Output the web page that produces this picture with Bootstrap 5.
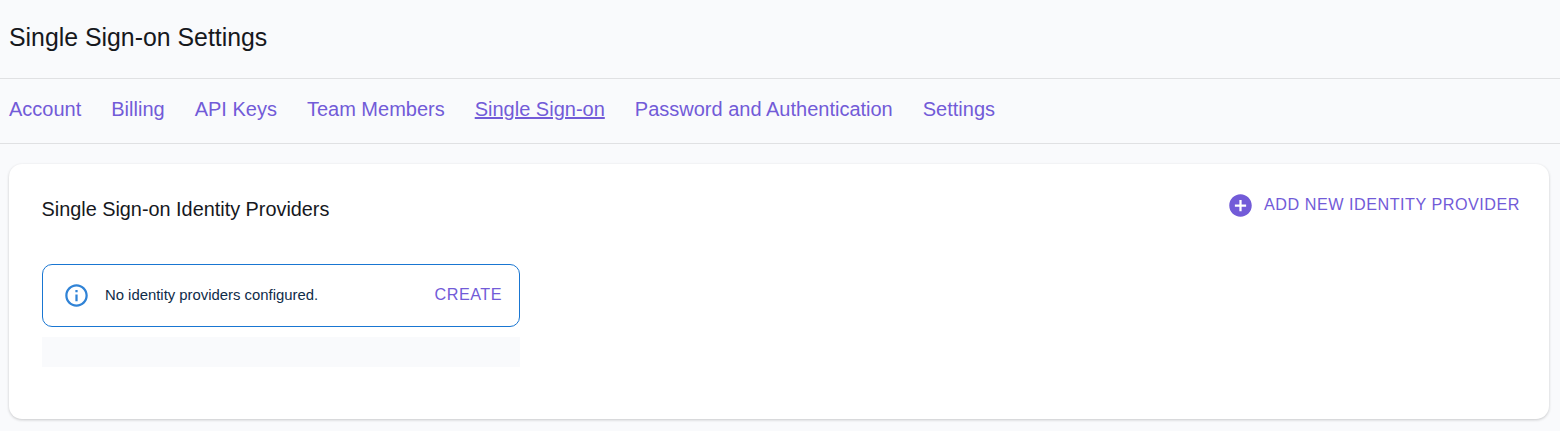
<!DOCTYPE html>
<html lang="en">
<head>
<meta charset="utf-8">
<meta name="viewport" content="width=device-width, initial-scale=1">
<title>Single Sign-on Settings</title>
<link href="https://cdn.jsdelivr.net/npm/bootstrap@5.3.0/dist/css/bootstrap.min.css" rel="stylesheet">
<style>
body{background:#f9fafc;font-family:"Liberation Sans",Arial,sans-serif;color:#16181d;min-height:100vh}
.page-head{height:79px;padding:0 9px 3px;border-bottom:1px solid #e0e1e3}
.page-head h1{font-size:24.85px;line-height:30px;font-weight:400}
.tabs{height:65px;padding:0 9px 4px;gap:30px;border-bottom:1px solid #e0e1e3}
.tabs .nav-link{padding:0;font-size:20px;line-height:30px;color:#725bd8}
.tabs .active{text-decoration:underline}
.panel{margin:20px 11px 0 9px;height:255px;border:0;border-radius:13px;background:#fff;padding:28px 29px 0 32.500px;box-shadow:0 1px 3px rgba(0,0,0,.2)}
.panel h2{font-size:19.85px;line-height:30px;font-weight:400;margin-top:2px}
.action{color:#725bd8;padding:0;border:0;font-size:16.2px;line-height:24px;letter-spacing:.5px}
.add{gap:10px;height:26px}
.info-box{width:478px;height:63px;margin:40px 0 0 .5px;padding:0 17px 0 20px;border:1px solid #1976d2;border-radius:10px;background:#fff}
.info-box .msg{font-size:14.87px;color:#0f2c49;margin-left:15px}
.info-box .action{margin-top:-3px}
.add span{margin-top:-2px}
.strip{width:478px;height:30px;margin:10px 0 0 .5px;background:#f9fafc}
</style>
</head>
<body>
<header class="page-head d-flex align-items-center"><h1 class="m-0">Single Sign-on Settings</h1></header>
<nav class="tabs nav flex-nowrap align-items-center">
<a class="nav-link" href="#">Account</a>
<a class="nav-link" href="#">Billing</a>
<a class="nav-link" href="#">API Keys</a>
<a class="nav-link" href="#">Team Members</a>
<a class="nav-link active" href="#">Single Sign-on</a>
<a class="nav-link" href="#">Password and Authentication</a>
<a class="nav-link" href="#">Settings</a>
</nav>
<main class="panel card">
<div class="d-flex justify-content-between align-items-start">
<h2 class="mb-0">Single Sign-on Identity Providers</h2>
<button class="btn action add d-flex align-items-center"><svg width="27" height="27" viewBox="0 0 24 24" fill="currentColor"><path d="M12 2C6.480 2 2 6.480 2 12s4.480 10 10 10 10-4.480 10-10S17.520 2 12 2zm5 11h-4v4h-2v-4H7v-2h4V7h2v4h4v2z"/></svg><span>ADD NEW IDENTITY PROVIDER</span></button>
</div>
<div class="info-box d-flex align-items-center" role="alert">
<svg width="27" height="27" viewBox="0 0 24 24" fill="#1976d2" fill-opacity=".9"><path d="M11 7h2v2h-2zm0 4h2v6h-2zm1-9C6.480 2 2 6.480 2 12s4.480 10 10 10 10-4.480 10-10S17.520 2 12 2zm0 18c-4.410 0-8-3.590-8-8s3.590-8 8-8 8 3.590 8 8-3.590 8-8 8z"/></svg>
<span class="msg">No identity providers configured.</span>
<button class="btn action ms-auto">CREATE</button>
</div>
<div class="strip"></div>
</main>
<script src="https://cdn.jsdelivr.net/npm/bootstrap@5.3.0/dist/js/bootstrap.bundle.min.js"></script>
</body>
</html>
